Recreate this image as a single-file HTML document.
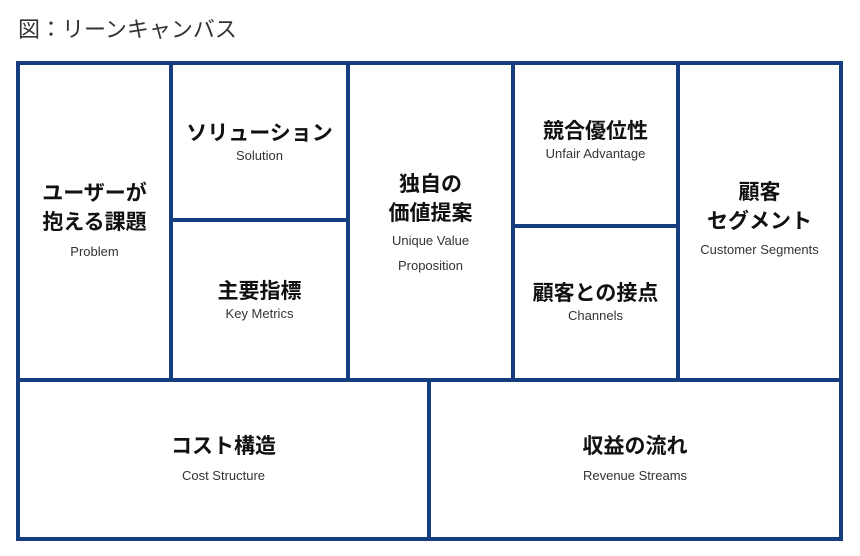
<!DOCTYPE html>
<html><head><meta charset="utf-8"><style>
body{margin:0;width:860px;height:556px;background:#fff;position:relative;overflow:hidden;font-family:"Liberation Sans","Noto Sans CJK JP",sans-serif;}
.l{position:absolute;background:#163d7e;}
.t{position:absolute;text-align:center;color:#111;}
.j{font-weight:bold;font-size:21px;line-height:29px;font-family:"Noto Sans CJK JP",sans-serif;}
.e{font-size:13px;color:#333;line-height:18px;margin-top:6px;}
</style></head><body>
<div style="position:absolute;left:18px;top:12px;font-size:22px;color:#333;font-family:'Noto Sans CJK JP',sans-serif;">図：リーンキャンバス</div>
<div class="l" style="left:16px;top:61px;width:827px;height:4px"></div>
<div class="l" style="left:16px;top:537px;width:827px;height:4px"></div>
<div class="l" style="left:16px;top:378px;width:827px;height:4px"></div>
<div class="l" style="left:16px;top:61px;width:4px;height:480px"></div>
<div class="l" style="left:839px;top:61px;width:4px;height:480px"></div>
<div class="l" style="left:169px;top:61px;width:4px;height:320px"></div>
<div class="l" style="left:346px;top:61px;width:4px;height:320px"></div>
<div class="l" style="left:511px;top:61px;width:4px;height:320px"></div>
<div class="l" style="left:676px;top:61px;width:4px;height:320px"></div>
<div class="l" style="left:427px;top:378px;width:4px;height:163px"></div>
<div class="l" style="left:169px;top:218px;width:180px;height:4px"></div>
<div class="l" style="left:511px;top:224px;width:168px;height:4px"></div>

<div class="t" style="left:20px;width:149px;top:178px"><div class="j">ユーザーが<br>抱える課題</div><div class="e" style="margin-top:7px">Problem</div></div>
<div class="t" style="left:173px;width:173px;top:118px"><div class="j">ソリューション</div><div class="e" style="margin-top:0">Solution</div></div>
<div class="t" style="left:173px;width:173px;top:276px"><div class="j">主要指標</div><div class="e" style="margin-top:0">Key Metrics</div></div>
<div class="t" style="left:350px;width:161px;top:169px"><div class="j">独自の<br>価値提案</div><div class="e" style="margin-top:1px;line-height:25px">Unique Value<br>Proposition</div></div>
<div class="t" style="left:515px;width:161px;top:116px"><div class="j">競合優位性</div><div class="e" style="margin-top:0">Unfair Advantage</div></div>
<div class="t" style="left:515px;width:161px;top:278px"><div class="j">顧客との接点</div><div class="e" style="margin-top:0">Channels</div></div>
<div class="t" style="left:680px;width:159px;top:177px"><div class="j">顧客<br>セグメント</div><div class="e" style="margin-top:6px">Customer Segments</div></div>
<div class="t" style="left:20px;width:407px;top:431px"><div class="j">コスト構造</div><div class="e" style="margin-top:7px">Cost Structure</div></div>
<div class="t" style="left:431px;width:408px;top:431px"><div class="j">収益の流れ</div><div class="e" style="margin-top:7px">Revenue Streams</div></div>
</body></html>
